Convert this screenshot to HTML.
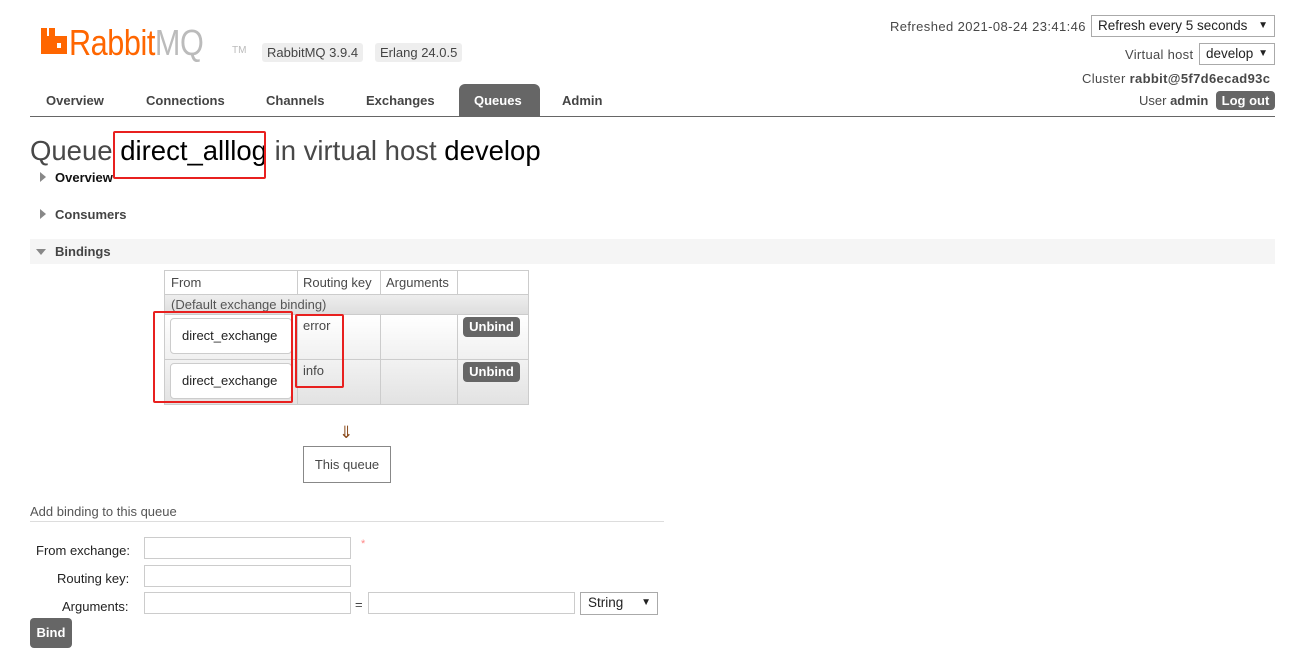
<!DOCTYPE html>
<html><head><meta charset="utf-8"><style>
*{box-sizing:border-box}
body{margin:0;width:1301px;height:651px;background:#fff;font-family:"Liberation Sans","DejaVu Sans",sans-serif;font-size:13px;color:#484848;position:relative;overflow:hidden}
.a{position:absolute;white-space:nowrap}
.badge{background:#eee;border-radius:3px;padding:2px 5px;font-size:13px;color:#444}
.nav{font-weight:bold;font-size:13px;color:#444}
.sel{border:1px solid #aaa;background:#fff;color:#222;height:22px;padding:0 6px;line-height:20px;font-size:13.5px}
.ar{position:absolute;right:6px;top:0;font-size:10px;line-height:20px}
.btn{background:#666;color:#fff;font-weight:bold;border-radius:4px;text-align:center}
.sec{font-weight:bold;color:#444}
.tri{width:0;height:0;position:absolute}
table{border-collapse:collapse}
td,th{border:1px solid #ccc}
.inp{border:1px solid #ccc;height:22px;background:#fff;position:absolute}
.red{border:2px solid #e8201f;position:absolute;border-radius:2px}
</style></head><body>
<svg class="a" style="left:41px;top:28px" width="27" height="27" viewBox="0 0 27 27"><path d="M0 0H6V8H8V0H14V8H26V26H0Z M16 15V20H20V15Z" fill="#f60" fill-rule="evenodd"/></svg>
<div class="a" style="left:69px;top:22px;font-size:36px;color:#f60;letter-spacing:-0.5px;transform:scaleX(0.85);transform-origin:0 0">Rabbit<span style="color:#bbb">MQ</span></div>
<div class="a" style="left:232px;top:45px;font-size:10px;color:#bbb">TM</div>
<div class="a badge" style="left:262px;top:43px">RabbitMQ 3.9.4</div>
<div class="a badge" style="left:375px;top:43px">Erlang 24.0.5</div>
<div class="a nav" style="left:46px;top:93px">Overview</div>
<div class="a nav" style="left:146px;top:93px">Connections</div>
<div class="a nav" style="left:266px;top:93px">Channels</div>
<div class="a nav" style="left:366px;top:93px">Exchanges</div>
<div class="a" style="left:459px;top:84px;width:81px;height:32px;background:#666;border-radius:6px 6px 0 0"></div>
<div class="a nav" style="left:474px;top:93px;color:#fff">Queues</div>
<div class="a nav" style="left:562px;top:93px">Admin</div>
<div class="a" style="left:30px;top:116px;width:1245px;height:1px;background:#666"></div>
<div class="a" style="left:890px;top:19px;letter-spacing:0.4px">Refreshed 2021-08-24 23:41:46</div>
<div class="a sel" style="left:1091px;top:15px;width:184px">Refresh every 5 seconds<span class="ar">▼</span></div>
<div class="a" style="left:1125px;top:47px;letter-spacing:0.3px">Virtual host</div>
<div class="a sel" style="left:1199px;top:43px;width:76px">develop<span class="ar">▼</span></div>
<div class="a" style="left:1082px;top:71px;letter-spacing:0.35px">Cluster <b>rabbit@5f7d6ecad93c</b></div>
<div class="a" style="left:1139px;top:93px">User <b>admin</b></div>
<div class="a btn" style="left:1216px;top:91px;width:59px;height:19px;line-height:19px">Log out</div>
<div class="a" style="left:30px;top:135px;font-size:27.5px;color:#484848">Queue <span style="color:#000">direct_alllog</span> in virtual host <span style="color:#000">develop</span></div>
<div class="red" style="left:113px;top:131px;width:153px;height:48px"></div>
<div class="tri" style="left:40px;top:172px;border-left:6px solid #888;border-top:5px solid transparent;border-bottom:5px solid transparent"></div>
<div class="a sec" style="left:55px;top:170px;color:#111">Overview</div>
<div class="tri" style="left:40px;top:209px;border-left:6px solid #888;border-top:5px solid transparent;border-bottom:5px solid transparent"></div>
<div class="a sec" style="left:55px;top:207px">Consumers</div>
<div class="a" style="left:30px;top:239px;width:1245px;height:25px;background:#f5f5f5"></div>
<div class="tri" style="left:36px;top:249px;border-top:6px solid #888;border-left:5px solid transparent;border-right:5px solid transparent"></div>
<div class="a sec" style="left:55px;top:244px">Bindings</div>
<table class="a" style="left:164px;top:270px;font-size:13px">
<tr style="height:24px"><td style="width:133px;padding-left:6px">From</td><td style="width:83px;padding-left:5px">Routing key</td><td style="width:77px;padding-left:5px">Arguments</td><td style="width:71px"></td></tr>
<tr style="height:20px;background:linear-gradient(#eee,#ddd)"><td colspan="4" style="padding-left:6px;color:#555">(Default exchange binding)</td></tr>
<tr style="height:45px;background:linear-gradient(#fff,#f0f0f0)"><td></td><td style="vertical-align:top;padding:3px 5px">error</td><td></td><td></td></tr>
<tr style="height:45px;background:linear-gradient(#f2f2f2,#e2e2e2)"><td></td><td style="vertical-align:top;padding:3px 5px">info</td><td></td><td></td></tr>
</table>
<div class="a" style="left:170px;top:318px;width:122px;height:36px;border:1px solid #ccc;border-radius:4px;background:#fff;line-height:34px;padding-left:11px;color:#222">direct_exchange</div>
<div class="a" style="left:170px;top:363px;width:122px;height:36px;border:1px solid #ccc;border-radius:4px;background:#fff;line-height:34px;padding-left:11px;color:#222">direct_exchange</div>
<div class="a btn" style="left:463px;top:317px;width:57px;height:20px;line-height:20px">Unbind</div>
<div class="a btn" style="left:463px;top:362px;width:57px;height:20px;line-height:20px">Unbind</div>
<div class="red" style="left:153px;top:311px;width:140px;height:92px"></div>
<div class="red" style="left:295px;top:314px;width:49px;height:74px"></div>
<div class="a" style="left:339px;top:423px;font-size:17px;color:#8a4a1a">⇓</div>
<div class="a" style="left:303px;top:446px;width:88px;height:37px;border:1px solid #888;line-height:35px;text-align:center">This queue</div>
<div class="a" style="left:30px;top:504px;color:#555">Add binding to this queue</div>
<div class="a" style="left:30px;top:521px;width:634px;height:1px;background:#ddd"></div>
<div class="a" style="left:36px;top:543px;color:#222">From exchange:</div>
<div class="inp" style="left:144px;top:537px;width:207px"></div>
<div class="a" style="left:361px;top:538px;color:#f88;font-size:11px">*</div>
<div class="a" style="left:57px;top:571px;color:#222">Routing key:</div>
<div class="inp" style="left:144px;top:565px;width:207px"></div>
<div class="a" style="left:62px;top:599px;color:#222">Arguments:</div>
<div class="inp" style="left:144px;top:592px;width:207px"></div>
<div class="a" style="left:355px;top:597px">=</div>
<div class="inp" style="left:368px;top:592px;width:207px"></div>
<div class="a sel" style="left:580px;top:592px;width:78px;height:23px;padding-left:7px">String<span class="ar">▼</span></div>
<div class="a btn" style="left:30px;top:618px;width:42px;height:30px;line-height:30px">Bind</div>
</body></html>
